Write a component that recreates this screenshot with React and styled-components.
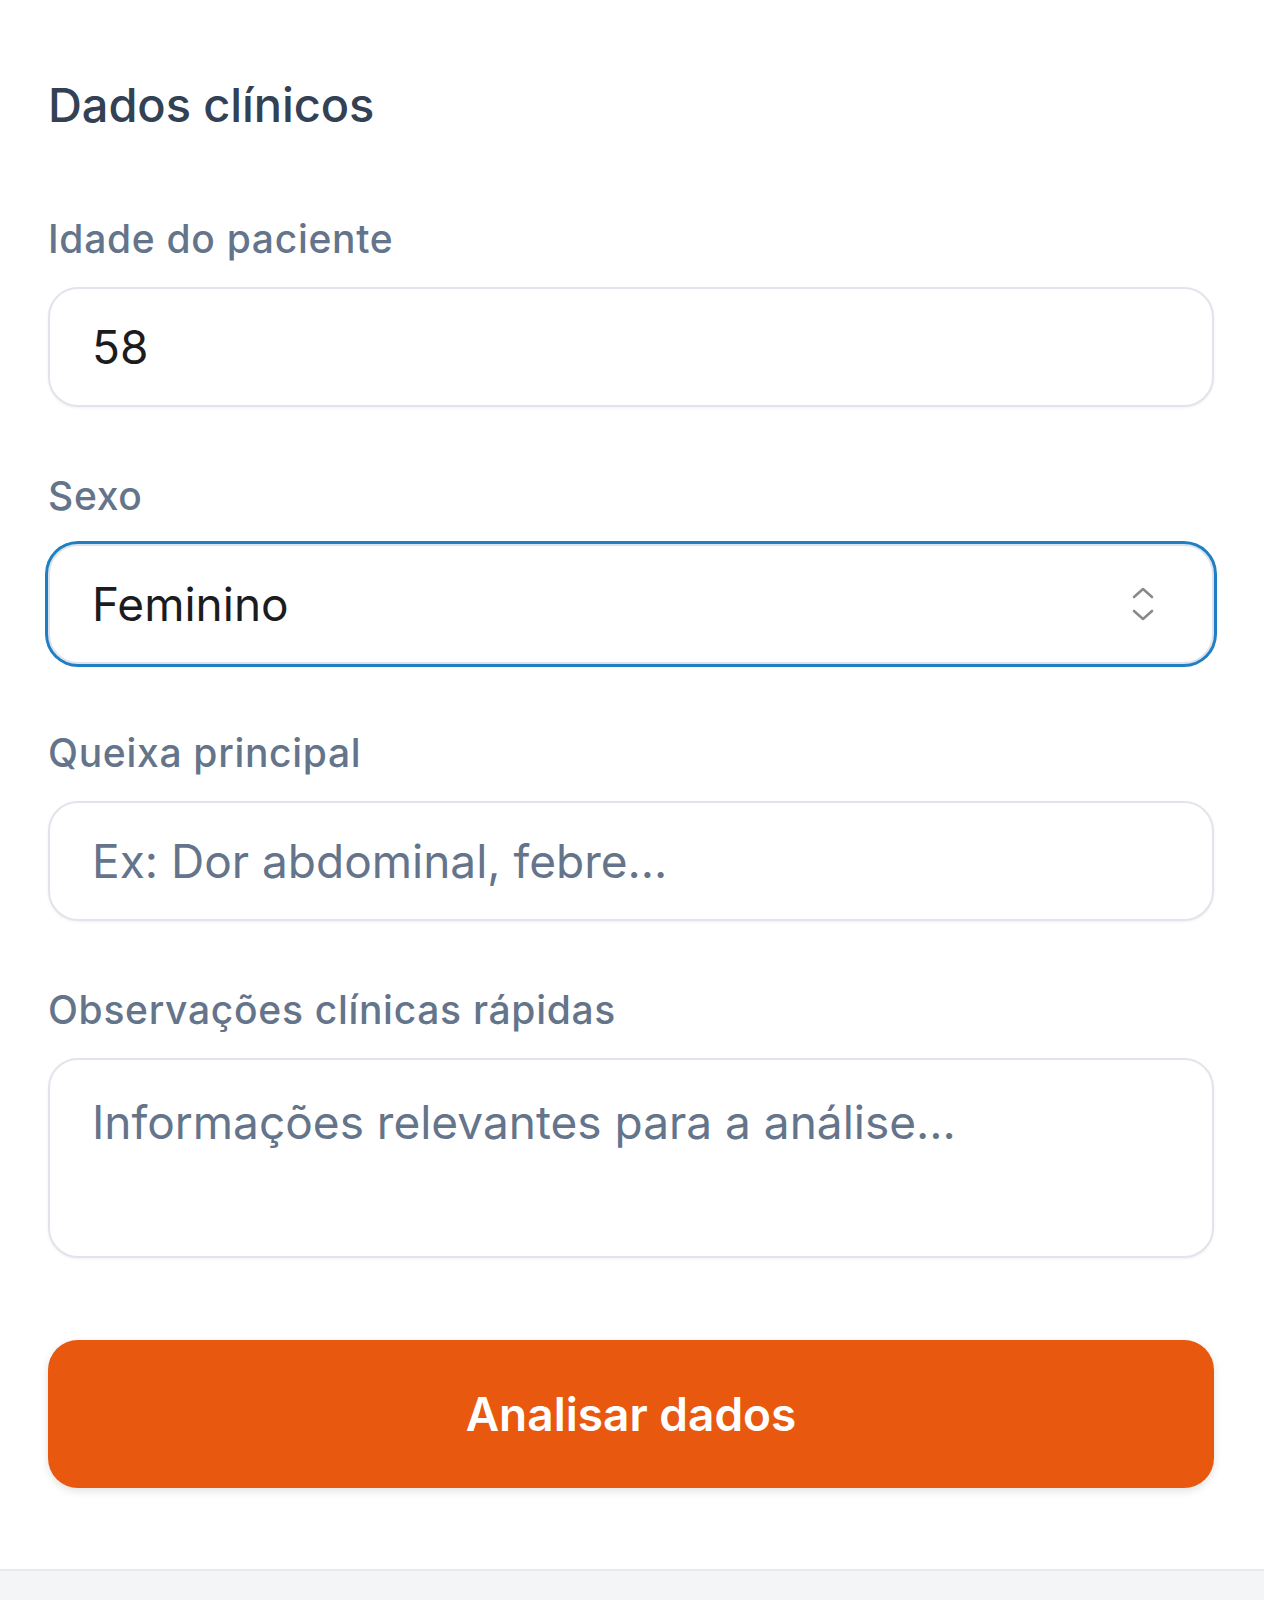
import React, { useState } from "react";
import styled, { createGlobalStyle } from "styled-components";

const COLORS = {
  title: "#334155",
  label: "#64748b",
  text: "#1c1c1e",
  placeholder: "#64748b",
  border: "#e1e4ea",
  focus: "#1f7fc2",
  orange: "#e8580e",
  page: "#f4f5f7",
};

const GlobalStyle = createGlobalStyle`
  body {
    margin: 0;
    background: ${COLORS.page};
    font-family: Inter, "Noto Sans", "Liberation Sans", sans-serif;
  }
`;

const Card = styled.section`
  background: #fff;
  padding: 76px 50px 81px 48px;
  border-bottom: 2px solid #e7eaef;
  display: flex;
  flex-direction: column;
`;

const Title = styled.h2`
  margin: 0 0 82px;
  font-size: 47px;
  line-height: 58px;
  font-weight: 500;
  color: ${COLORS.title};
  letter-spacing: -0.1px;
`;

const Form = styled.form`
  display: flex;
  flex-direction: column;
  gap: 66px;
`;

const Field = styled.div`
  display: flex;
  flex-direction: column;
  gap: 25px;
`;

const Label = styled.label`
  font-size: 39px;
  line-height: 46px;
  font-weight: 500;
  color: ${COLORS.label};
  letter-spacing: 0.7px;
`;

const fieldBase = `
  box-sizing: border-box;
  width: 100%;
  border: 2px solid ${COLORS.border};
  border-radius: 30px;
  background: #fff;
  font-family: Inter, "Noto Sans", "Liberation Sans", sans-serif;
  font-size: 46px;
  color: ${COLORS.text};
  padding: 0 42px;
  box-shadow: 0 1px 3px rgba(15, 23, 42, 0.06);
  outline: none;
  &::placeholder {
    color: ${COLORS.placeholder};
    opacity: 1;
  }
`;

const Input = styled.input`
  ${fieldBase}
  height: 120px;
`;

const TextArea = styled.textarea`
  ${fieldBase}
  height: 200px;
  padding-top: 34px;
  line-height: 56px;
  resize: none;
  display: block;
`;

const SelectWrap = styled.div`
  position: relative;
`;

const Select = styled.select`
  ${fieldBase}
  height: 120px;
  appearance: none;
  -webkit-appearance: none;
  box-shadow: 0 0 0 3px ${COLORS.focus};
  border-color: #dde3ec;
`;

const SelectIcon = styled.svg`
  position: absolute;
  right: 60px;
  top: 50%;
  transform: translateY(-50%);
  pointer-events: none;
`;

const Button = styled.button`
  margin-top: 82px;
  height: 148px;
  border: none;
  border-radius: 30px;
  background: ${COLORS.orange};
  color: #fff;
  font-family: Inter, "Noto Sans", "Liberation Sans", sans-serif;
  font-size: 46px;
  font-weight: 600;
  box-shadow: 0 3px 8px rgba(0, 0, 0, 0.12);
  cursor: pointer;
`;

const App = () => {
  const [age, setAge] = useState("58");
  const [sex, setSex] = useState("Feminino");

  return (
    <>
      <GlobalStyle />
      <Card>
        <Title>Dados clínicos</Title>
        <Form onSubmit={(e) => e.preventDefault()}>
          <Field>
            <Label htmlFor="idade">Idade do paciente</Label>
            <Input id="idade" value={age} onChange={(e) => setAge(e.target.value)} />
          </Field>
          <Field>
            <Label htmlFor="sexo">Sexo</Label>
            <SelectWrap>
              <Select id="sexo" value={sex} onChange={(e) => setSex(e.target.value)}>
                <option>Feminino</option>
                <option>Masculino</option>
              </Select>
              <SelectIcon width="22" height="34" viewBox="0 0 22 34" fill="none">
                <path d="M2 10 L11 2 L20 10" stroke="#8a8a8e" strokeWidth="2.6" strokeLinecap="round" strokeLinejoin="round" />
                <path d="M2 24 L11 32 L20 24" stroke="#8a8a8e" strokeWidth="2.6" strokeLinecap="round" strokeLinejoin="round" />
              </SelectIcon>
            </SelectWrap>
          </Field>
          <Field>
            <Label htmlFor="queixa">Queixa principal</Label>
            <Input id="queixa" placeholder="Ex: Dor abdominal, febre..." />
          </Field>
          <Field>
            <Label htmlFor="obs">Observações clínicas rápidas</Label>
            <TextArea id="obs" placeholder="Informações relevantes para a análise..." />
          </Field>
        </Form>
        <Button type="button">Analisar dados</Button>
      </Card>
    </>
  );
};

export default App;
